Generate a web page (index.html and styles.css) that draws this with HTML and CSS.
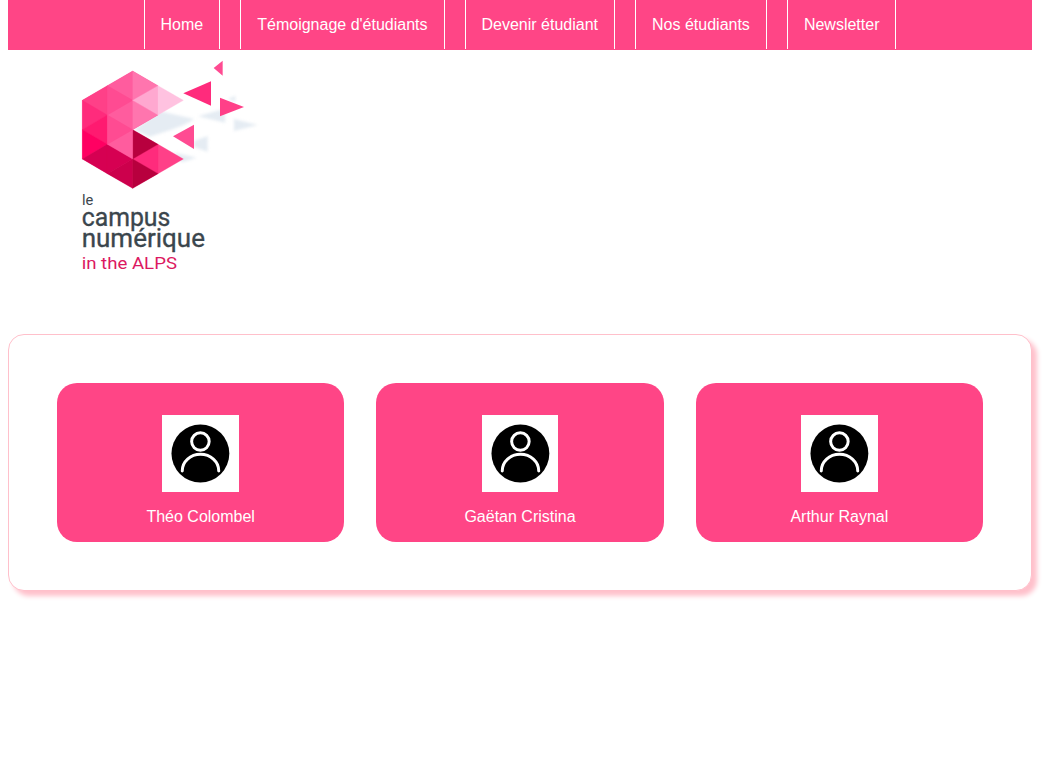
FILE: index.html
```html
<!DOCTYPE html>
<html lang="fr">
<head>
<meta charset="utf-8">
<title>Nos étudiants</title>
<link rel="stylesheet" href="styles.css">
</head>
<body>
<nav class="nav">
  <a class="nav-link">Home</a>
  <a class="nav-link">Témoignage d'étudiants</a>
  <a class="nav-link">Devenir étudiant</a>
  <a class="nav-link">Nos étudiants</a>
  <a class="nav-link">Newsletter</a>
</nav>
<header class="header">
  <svg class="logo" viewBox="0 0 600 690" role="img" aria-label="le campus numérique in the ALPS">
    <g class="logo-shadow">
      <path d="M192 224L268 168L372 192Q350 212 238 245Z"/>
      <path d="M384 184L450 165L464 172L466 203Z"/>
      <path d="M474 132L496 122V140Z"/>
      <path d="M492 192L562 210L492 228Z"/>
      <path d="M372 258L413 243V290L372 276Z"/>
      <path d="M310 292L380 308L335 322Z"/>
    </g>
    <path fill="#ff4b92" d="M37 136L188 48L264 92V180L188 224L264 268V356L188 400L37 312Z"/>
    <g class="logo-facets">
      <path fill="#ff4088" stroke="#ff4088" d="M37 136L112 92V180ZM264 268L340 312L264 356Z"/>
      <path fill="#ff2b7c" stroke="#ff2b7c" d="M37 136L112 180L37 224ZM188 312L264 268V356Z"/>
      <path fill="#ff1a70" stroke="#ff1a70" d="M112 180L37 224L112 268Z"/>
      <path fill="#ff0062" stroke="#ff0062" d="M37 224L112 268L37 312Z"/>
      <path fill="#d60052" stroke="#d60052" d="M37 312L112 268V356ZM112 268L188 312L112 356Z"/>
      <path fill="#cc004c" stroke="#cc004c" d="M112 356L188 312V400Z"/>
      <path fill="#b8003e" stroke="#b8003e" d="M188 224L264 268L188 312ZM188 312L264 356L188 400Z"/>
      <path fill="#ff5c9e" stroke="#ff5c9e" d="M112 92L188 48V136ZM112 180L188 136V224ZM112 268L188 224V312Z"/>
      <path fill="#ff4b92" stroke="#ff4b92" d="M112 92L188 136L112 180ZM112 180L188 224L112 268Z"/>
      <path fill="#ff75ae" stroke="#ff75ae" d="M188 48L264 92L188 136ZM188 136L264 180L188 224Z"/>
      <path fill="#ffa8d0" stroke="#ffa8d0" d="M188 136L264 92V180Z"/>
      <path fill="#ffc2e0" stroke="#ffc2e0" d="M264 92L340 136L264 180Z"/>
    </g>
    <path fill="#ff2b7c" d="M340 115L423 79V152Z"/>
    <path fill="#ff4b92" d="M431 39L458 17V62ZM309 244L372 209V282Z"/>
    <path fill="#ff4088" d="M450 128L522 156L450 184Z"/>
    <g class="logo-text">
      <text x="36" y="450" font-size="45" textLength="34" lengthAdjust="spacingAndGlyphs">le</text>
      <text class="logo-name" x="35" y="514" font-size="76" textLength="266" lengthAdjust="spacingAndGlyphs">campus</text>
      <text class="logo-name" x="35" y="577" font-size="76" textLength="370" lengthAdjust="spacingAndGlyphs">numérique</text>
      <text class="logo-tagline" x="35" y="642" font-size="51" textLength="286" lengthAdjust="spacingAndGlyphs">in the ALPS</text>
    </g>
  </svg>
</header>
<svg class="symbols" aria-hidden="true">
  <symbol id="person" viewBox="0 0 77 77">
    <circle cx="38.5" cy="38.5" r="29"/>
    <g fill="none" stroke="#fff" stroke-width="3" stroke-linecap="round">
      <circle cx="38.5" cy="26.5" r="8.8"/>
      <path d="M20.3 56A18.3 16.7 0 0 1 56.9 56"/>
    </g>
  </symbol>
</svg>
<main class="students">
  <article class="card">
    <svg class="avatar"><use href="#person"/></svg>
    <span class="name">Théo Colombel</span>
  </article>
  <article class="card">
    <svg class="avatar"><use href="#person"/></svg>
    <span class="name">Gaëtan Cristina</span>
  </article>
  <article class="card">
    <svg class="avatar"><use href="#person"/></svg>
    <span class="name">Arthur Raynal</span>
  </article>
</main>
</body>
</html>
```
FILE: styles.css
```css
* { box-sizing: border-box; }
html { background: #fff; }
body {
  min-height: 778px;
  margin: 0;
  padding: 0 32px 0 8px;
  font: 16px/18px "Liberation Sans", Arial, sans-serif;
}
.nav {
  display: flex;
  justify-content: center;
  gap: 20px;
  height: 50px;
  padding-bottom: 1px;
  background: #ff4586;
}
.nav-link {
  padding: 16px 16px 0;
  border: solid #fff;
  border-width: 0 1px;
  color: #fff;
}
.header {
  height: 284px;
  padding: 5px 0 0 62px;
}
.logo {
  display: block;
  width: 200px;
  height: 230px;
}
.logo-shadow { fill: #e5ecf3; filter: blur(4px); }
.logo-facets { stroke-width: 1; }
.logo-text {
  fill: #3b464d;
  font-family: Roboto, sans-serif;
}
.logo-name { stroke: #3b464d; stroke-width: 1; }
.logo-tagline { fill: #dc1861; }
.symbols { display: none; }
.students {
  display: grid;
  grid-template-columns: repeat(3, 1fr);
  gap: 32px;
  padding: 48px;
  border: 1px solid pink;
  border-radius: 16px;
  background: #fff;
  box-shadow: 5px 5px 5px pink;
}
.card {
  display: flex;
  flex-direction: column;
  align-items: center;
  gap: 16px;
  height: 159px;
  padding: 32px 16px 16px;
  border-radius: 20px;
  background: #ff4586;
  color: #fff;
}
.avatar {
  width: 76.8px;
  height: 77px;
  flex: none;
  background: #fff;
}
```
